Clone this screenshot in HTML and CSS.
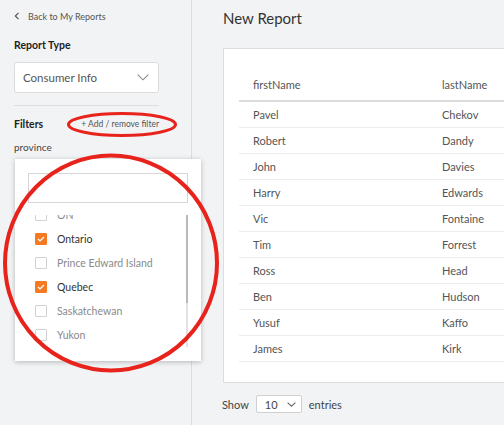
FILE: index.html
```html
<!DOCTYPE html>
<html>
<head>
<meta charset="utf-8">
<link rel="stylesheet" href="styles.css">
</head>
<body>
<div class="app">
  <aside class="sidebar">
    <div class="back">
      <svg class="back-icon" width="6" height="8" viewBox="0 0 6 8"><path d="M4.5 0.8 L1.3 4 L4.5 7.2" fill="none" stroke="#555" stroke-width="1.2"/></svg>
      <span>Back to My Reports</span>
    </div>
    <div class="label">Report Type</div>
    <div class="select">
      <span>Consumer Info</span>
      <svg width="12" height="7" viewBox="0 0 12 7"><path d="M0.7 0.7 L6 5.8 L11.3 0.7" fill="none" stroke="#888" stroke-width="1.1"/></svg>
    </div>
    <div class="divider"></div>
    <div class="filters-row">
      <span class="label-inline">Filters</span>
      <span class="add-filter">+ Add / remove filter</span>
    </div>
    <div class="filter">
      <div class="filter-name">province</div>
      <div class="panel">
        <div class="search"></div>
        <div class="list">
          <div class="items">
            <div class="item"><span class="box"></span><span>ON</span></div>
            <div class="item checked"><span class="box"><svg width="8" height="6" viewBox="0 0 8 6"><path d="M1 3 L3 5 L7 1" fill="none" stroke="#fff" stroke-width="1.2"/></svg></span><span>Ontario</span></div>
            <div class="item"><span class="box"></span><span>Prince Edward Island</span></div>
            <div class="item checked"><span class="box"><svg width="8" height="6" viewBox="0 0 8 6"><path d="M1 3 L3 5 L7 1" fill="none" stroke="#fff" stroke-width="1.2"/></svg></span><span>Quebec</span></div>
            <div class="item"><span class="box"></span><span>Saskatchewan</span></div>
            <div class="item"><span class="box"></span><span>Yukon</span></div>
          </div>
          <div class="scrollbar"><div class="thumb"></div></div>
        </div>
      </div>
    </div>
  </aside>
  <main class="main">
    <h1 class="title">New Report</h1>
    <div class="card">
      <table class="table">
        <thead>
          <tr><th class="c1">firstName</th><th>lastName</th></tr>
        </thead>
        <tbody>
          <tr><td>Pavel</td><td>Chekov</td></tr>
          <tr><td>Robert</td><td>Dandy</td></tr>
          <tr><td>John</td><td>Davies</td></tr>
          <tr><td>Harry</td><td>Edwards</td></tr>
          <tr><td>Vic</td><td>Fontaine</td></tr>
          <tr><td>Tim</td><td>Forrest</td></tr>
          <tr><td>Ross</td><td>Head</td></tr>
          <tr><td>Ben</td><td>Hudson</td></tr>
          <tr><td>Yusuf</td><td>Kaffo</td></tr>
          <tr><td>James</td><td>Kirk</td></tr>
        </tbody>
      </table>
    </div>
    <div class="show">
      <span>Show</span>
      <div class="mini-select">
        <span>10</span>
        <svg width="9" height="5" viewBox="0 0 9 5"><path d="M0.6 0.6 L4.5 4.2 L8.4 0.6" fill="none" stroke="#666" stroke-width="1.1"/></svg>
      </div>
      <span>entries</span>
    </div>
  </main>
</div>
<svg class="marks" width="504" height="425" viewBox="0 0 504 425">
  <ellipse cx="122" cy="124.5" rx="53.5" ry="11" fill="none" stroke="#e8231c" stroke-width="3"/>
  <ellipse cx="111" cy="263" rx="106" ry="107.5" fill="none" stroke="#e8231c" stroke-width="4"/>
</svg>
</body>
</html>
```
FILE: styles.css
```css
html, body {
  margin: 0;
  padding: 0;
}
body {
  width: 504px;
  height: 425px;
  overflow: hidden;
  background: #f2f3f5;
  font-family: Lato, "Open Sans", sans-serif;
  color: #444;
  position: relative;
}
.app {
  display: flex;
  height: 425px;
}
.sidebar {
  width: 145px;
  flex: none;
  padding: 10px 32px 0 14px;
  border-right: 1px solid #dcdde0;
  background: #f2f3f5;
  position: relative;
  z-index: 2;
}
.back {
  display: flex;
  align-items: center;
  gap: 8px;
  height: 12px;
  font-size: 9px;
  color: #555;
}
.label {
  margin-top: 16px;
  height: 14px;
  line-height: 14px;
  font-size: 10.5px;
  font-weight: 700;
  color: #222;
}
.select {
  margin-top: 10px;
  height: 29px;
  border: 1px solid #dcdcdc;
  border-radius: 3px;
  background: #fff;
  display: flex;
  align-items: center;
  justify-content: space-between;
  padding: 0 9px 0 8px;
  font-size: 11.5px;
  color: #555;
}
.divider {
  margin-top: 12px;
  height: 1px;
  background: #dcdde0;
}
.filters-row {
  margin-top: 11px;
  height: 14px;
  line-height: 14px;
  display: flex;
  justify-content: space-between;
  align-items: center;
}
.label-inline {
  font-size: 10.5px;
  font-weight: 700;
  color: #222;
}
.add-filter {
  font-size: 8.5px;
  color: #555;
}
.filter {
  position: relative;
  margin-top: 9px;
}
.filter-name {
  height: 14px;
  line-height: 14px;
  font-size: 10px;
  color: #444;
}
.panel {
  position: absolute;
  top: 19px;
  left: 1px;
  width: 160px;
  height: 178px;
  padding: 14px 13px 10px 13px;
  background: #fff;
  box-shadow: 0 1px 5px rgba(0, 0, 0, 0.25);
}
.search {
  height: 28px;
  border: 1px solid #d6d6d6;
  background: #fff;
}
.list {
  margin-top: 12px;
  height: 132px;
  overflow: hidden;
  position: relative;
}
.items {
  margin-top: -12px;
}
.item {
  height: 24px;
  display: flex;
  align-items: center;
  gap: 10px;
  padding-left: 7px;
  font-size: 10.5px;
  color: #8a8a8a;
}
.item.checked {
  color: #333;
}
.box {
  width: 10px;
  height: 10px;
  border: 1px solid #d2d2d2;
  border-radius: 1px;
  background: #fff;
  display: flex;
  align-items: center;
  justify-content: center;
  flex: none;
}
.item.checked .box {
  background: #f47920;
  border-color: #f47920;
}
.scrollbar {
  position: absolute;
  right: 0;
  top: 0;
  width: 2px;
  height: 132px;
  background: #e2e2e2;
}
.thumb {
  height: 88px;
  background: #b8b8b8;
}
.main {
  flex: 1;
  overflow: hidden;
  padding: 9px 0 0 31px;
}
.title {
  margin: 0;
  height: 18px;
  line-height: 18px;
  font-size: 15px;
  font-weight: 400;
  color: #333;
}
.card {
  margin-top: 21px;
  width: 420px;
  background: #fff;
  border: 1px solid #dcdde0;
  padding: 19px 0 20px 15px;
}
.table {
  width: 100%;
  border-collapse: collapse;
  font-size: 11px;
  color: #555;
}
.table th {
  text-align: left;
  font-weight: 400;
  height: 32px;
  padding: 0 14px;
  border-bottom: 2px solid #dcdcdc;
  vertical-align: middle;
}
.table th.c1 {
  width: 161px;
}
.table td {
  height: 25px;
  padding: 0 14px;
  border-bottom: 1px solid #ececec;
  vertical-align: middle;
}
.show {
  margin-top: 12px;
  display: flex;
  align-items: center;
  gap: 7px;
  font-size: 11px;
  color: #444;
  margin-left: -1px;
}
.mini-select {
  width: 31px;
  height: 16px;
  border: 1px solid #d0d0d0;
  border-radius: 2px;
  background: #fff;
  display: flex;
  align-items: center;
  justify-content: space-between;
  padding: 0 5px 0 8px;
  font-size: 11px;
}
.marks {
  position: absolute;
  left: 0;
  top: 0;
  z-index: 5;
  pointer-events: none;
}
```
